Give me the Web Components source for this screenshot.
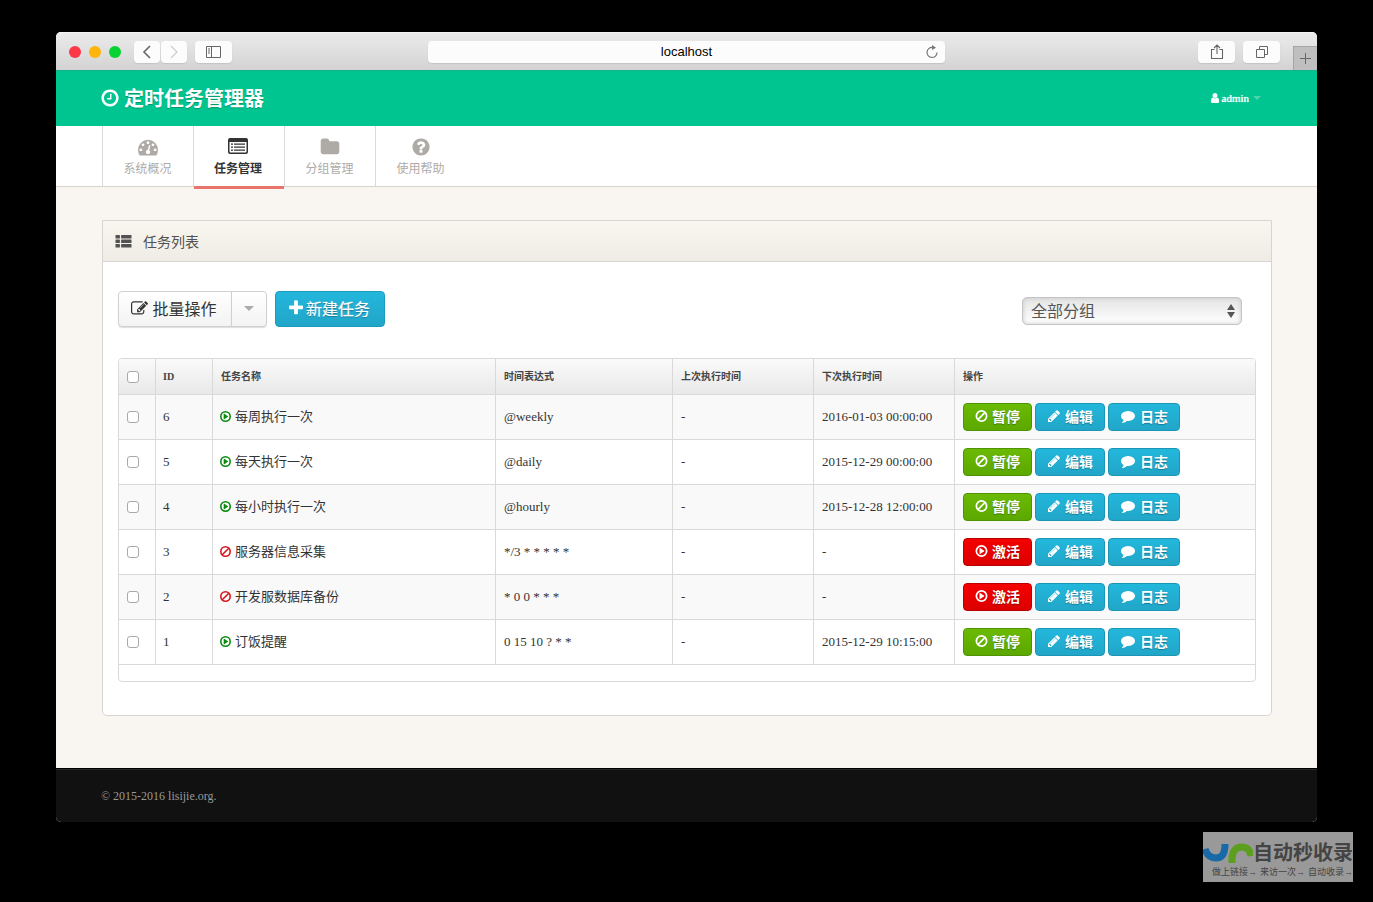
<!DOCTYPE html>
<html lang="zh-CN">
<head>
<meta charset="utf-8">
<title>定时任务管理器</title>
<style>
  body {
    margin: 0;
    padding: 32px 56px 80px;
    background: #000;
    color: #333;
    font: 13px/20px "Liberation Serif", "Noto Sans CJK SC", serif;
  }
</style>
</head>
<body>
<browser-window>
  <app-header></app-header>
  <app-nav>
    <nav-tab icon="dashboard">系统概况</nav-tab>
    <nav-tab icon="listalt" active>任务管理</nav-tab>
    <nav-tab icon="folder">分组管理</nav-tab>
    <nav-tab icon="question">使用帮助</nav-tab>
  </app-nav>
  <app-main>
    <list-panel heading="任务列表">
      <task-toolbar></task-toolbar>
      <task-table></task-table>
    </list-panel>
  </app-main>
  <app-footer>© 2015-2016 lisijie.org.</app-footer>
</browser-window>
<site-badge></site-badge>

<script>
const define = (name, html, setup) => customElements.define(name, class extends HTMLElement {
  connectedCallback() {
    if (this.shadowRoot) return;
    const root = this.attachShadow({ mode: "open" });
    const t = document.createElement("template");
    t.innerHTML = "<style>*{box-sizing:border-box}:host{display:block;box-sizing:border-box}</style>" +
      (typeof html === "function" ? html(this) : html);
    root.append(t.content.cloneNode(true));
    if (setup) setup(root, this);
  }
});

/* Icon set: [viewBox, markup] */
const ICONS = {
  clock: ["128 0 1536 1792", '<path d="M1024 544v448q0 14-9 23t-23 9h-320q-14 0-23-9t-9-23v-64q0-14 9-23t23-9h224v-352q0-14 9-23t23-9h64q14 0 23 9t9 23zm416 352q0-148-73-273t-198-198-273-73-273 73-198 198-73 273 73 273 198 198 273 73 273-73 198-198 73-273zm224 0q0 209-103 385.500t-279.500 279.500-385.500 103-385.500-103-279.500-279.500-103-385.500 103-385.500 279.500-279.500 385.500-103 385.500 103 279.500 279.500 103 385.500z"/>'],
  folder: ["64 0 1664 1792", '<path d="M1728 608v704q0 92-66 158t-158 66h-1216q-92 0-158-66t-66-158v-960q0-92 66-158t158-66h320q92 0 158 66t66 158v32h672q92 0 158 66t66 158z"/>'],
  comment: ["0 0 1792 1792", '<path d="M1792 896q0 174-120 321.500t-326 233-450 85.500q-70 0-145-8-198 175-460 242-49 14-114 22-17 2-30.500-9t-17.500-29v-1q-3-4-.5-12t2-10 4.500-9.500l6-9 7-8.500 8-9q7-8 31-34.500t34.500-38 31-39.500 32.500-51 27-59 26-76q-157-89-247.500-220t-90.500-281q0-130 71-248.500t191-204.500 286-136.500 348-50.500q244 0 450 85.500t326 233 120 321.500z"/>'],
  user: ["256 128 1280 1536", '<path d="M1536 1399q0 109-62.500 187t-150.500 78h-854q-88 0-150.500-78t-62.500-187q0-85 8.500-160.500t31.500-152 58.500-131 94-89 134.500-34.500q131 128 313 128t313-128q76 0 134.500 34.500t94 89 58.500 131 31.500 152 8.500 160.500zm-256-887q0 159-112.500 271.500t-271.500 112.500-271.500-112.500-112.500-271.500 112.500-271.500 271.500-112.500 271.500 112.500 112.500 271.500z"/>'],
  plus: ["192 0 1408 1792", '<path d="M1600 736v192q0 40-28 68t-68 28h-416v416q0 40-28 68t-68 28h-192q-40 0-68-28t-28-68v-416h-416q-40 0-68-28t-28-68v-192q0-40 28-68t68-28h416v-416q0-40 28-68t68-28h192q40 0 68 28t28 68v416h416q40 0 68 28t28 68z"/>'],
  pencil: ["128 0 1536 1792", '<path d="M491 1536l91-91-235-235-91 91v107h128v128h107zm523-928q0-22-22-22-10 0-17 7l-542 542q-7 7-7 17 0 22 22 22 10 0 17-7l542-542q7-7 7-17zm-54-192l416 416-832 832h-416v-416zm683 96q0 53-37 90l-166 166-416-416 166-165q36-38 90-38 53 0 91 38l235 234q37 39 37 91z"/>'],
  question: ["128 0 1536 1792", '<path d="M1024 1376v-192q0-14-9-23t-23-9h-192q-14 0-23 9t-9 23v192q0 14 9 23t23 9h192q14 0 23-9t9-23zm256-672q0-88-55.500-163t-138.500-116-170-41q-243 0-371 213-15 24 8 42l132 100q7 6 19 6 16 0 25-12 53-68 86-92 34-24 86-24 48 0 85.500 26t37.500 59q0 38-20 61t-68 45q-63 28-115.500 86.500t-52.500 125.500v36q0 14 9 23t23 9h192q14 0 23-9t9-23q0-19 21.500-49.500t54.500-49.500q32-18 49-28.500t46-35 44.500-48 28-60.500 12.500-81zm384 192q0 209-103 385.500t-279.500 279.500-385.500 103-385.500-103-279.500-279.500-103-385.500 103-385.500 279.500-279.500 385.500-103 385.500 103 279.500 279.500 103 385.500z"/>'],
  edit: ["0 0 1792 1792", '<path d="M888 1184l116-116-152-152-116 116v56h96v96h56zm440-720q-16-16-33 1l-350 350q-17 17-1 33t33-1l350-350q17-17 1-33zm80 594v190q0 119-84.500 203.500t-203.500 84.500h-832q-119 0-203.500-84.500t-84.500-203.500v-832q0-119 84.500-203.500t203.500-84.500h832q63 0 117 25 15 7 18 23 3 17-9 29l-49 49q-14 14-32 8-23-6-45-6h-832q-66 0-113 47t-47 113v832q0 66 47 113t113 47h832q66 0 113-47t47-113v-126q0-13 9-22l64-64q15-15 35-7t20 29zm-96-738l288 288-672 672h-288v-288zm444 132l-92 92-288-288 92-92q28-28 68-28t68 28l152 152q28 28 28 68t-28 68z"/>'],
  ban: ["128 0 1536 1792", '<g fill="none" stroke="currentColor" stroke-width="222"><circle cx="896" cy="896" r="656"/><path d="M1350 442L442 1350"/></g>'],
  play: ["128 0 1536 1792", '<circle cx="896" cy="896" r="656" fill="none" stroke="currentColor" stroke-width="222"/><path d="M660 500q30-20 64 0l510 350q50 46 0 92l-510 350q-34 20-64 0-20-14-20-42V542q0-28 20-42z"/>'],
  dashboard: ["0 0 1792 1792", '<path fill-rule="evenodd" d="M896 256a896 896 0 0 1 896 896q0 261-141 483-19 29-54 29H195q-35 0-54-29Q0 1413 0 1152a896 896 0 0 1 896-896zM256 1024a128 128 0 1 0 0 256 128 128 0 0 0 0-256zM448 576a128 128 0 1 0 0 256 128 128 0 0 0 0-256zM896 384a128 128 0 1 0 0 256 128 128 0 0 0 0-256zM1344 576a128 128 0 1 0 0 256 128 128 0 0 0 0-256zM1536 1024a128 128 0 1 0 0 256 128 128 0 0 0 0-256zM1004 1185l101-382q6-26-7-48.500t-38-29.500-48 6.500-30 39.500l-101 382q-60 5-107 43.500t-63 98.500q-20 77 20 146t117 89 146-20 89-117q16-60-6-117t-73-91z"/>'],
  listalt: ["0 0 20 20", '<path fill-rule="evenodd" d="M2 1h16q2 0 2 2v12q0 2-2 2H2q-2 0-2-2V3q0-2 2-2zM1.500 5v9.500q0 1 1 1h15q1 0 1-1V5z"/><path d="M3 6.500h2v1.300H3zM6 6.500h11v1.300H6zM3 9.500h2v1.300H3zM6 9.500h11v1.300H6zM3 12.500h2v1.300H3zM6 12.500h11v1.300H6z"/>'],
  thlist: ["0 0 16 14", '<rect y="1" width="4.400" height="3.500" rx=".6"/><rect x="5.600" y="1" width="10.400" height="3.500" rx=".6"/><rect y="5.500" width="4.400" height="3.500" rx=".6"/><rect x="5.600" y="5.500" width="10.400" height="3.500" rx=".6"/><rect y="10" width="4.400" height="3.500" rx=".6"/><rect x="5.600" y="10" width="10.400" height="3.500" rx=".6"/>'],
  caret: ["0 0 10 5", '<path d="M0 0h10L5 5z"/>'],
  updown: ["0 0 8 16", '<path d="M0 7h8L4 1zM0 9h8l-4 6z"/>'],
  back: ["0 0 14 14", '<path d="M10 1L4 7l6 6" fill="none" stroke="currentColor" stroke-width="1.600"/>'],
  forward: ["0 0 14 14", '<path d="M4 1l6 6-6 6" fill="none" stroke="currentColor" stroke-width="1.200"/>'],
  sidebar: ["0 0 16 14", '<path d="M.5 1.500h14v11H.5zM5.500 1.500v11M2 4h2M2 6h2M2 8h2" fill="none" stroke="currentColor"/>'],
  reload: ["0 0 14 14", '<path d="M7.500 2.500A5 5 0 1 0 12 7.500" fill="none" stroke="currentColor" stroke-width="1.200"/><path d="M7 0l4 2.700L7 5z"/>'],
  share: ["0 0 14 16", '<path d="M4.500 5.500h-3v9h11v-9h-3M7 10V1.500M4 4l3-3 3 3" fill="none" stroke="currentColor" stroke-width="1.100"/>'],
  tabs: ["0 0 14 14", '<path d="M1.500 4.500h8v8h-8zM4.500 4.500v-3h8v8h-3" fill="none" stroke="currentColor"/>'],
  newtab: ["0 0 12 12", '<path d="M5.500 0v11M0 5.500h11" fill="none" stroke="currentColor"/>'],
};
define("ui-icon", el => {
  const [box, body] = ICONS[el.getAttribute("name")];
  return `<style>:host{display:inline-block;flex:none;width:14px;height:14px}svg{display:block;width:100%;height:100%;overflow:visible;fill:currentColor}</style>
  <svg viewBox="${box}" aria-hidden="true">${body}</svg>`;
});

define("browser-bar", `<style>
  :host{display:grid;grid-template-columns:1fr minmax(0,517px) 1fr;height:38px;background:linear-gradient(#ebebeb,#d3d3d3);border-top:1px solid #f5f5f5}
  .side{display:flex;align-items:center;padding-left:13px}
  .lights{display:flex;gap:8px;margin-right:13px}
  .light{width:12px;height:12px;border-radius:50%}
  button{display:flex;align-items:center;justify-content:center;height:22px;padding:0;border:0;border-radius:4px;background:#fcfcfc;color:#666;box-shadow:0 1px 1px #c4c4c4}
  .back{width:26px;margin-right:1px}
  .fwd{width:26px;color:#ccc;margin-right:8px}
  .wide{width:37px}
  .address{align-self:center;display:flex;align-items:center;height:22px;padding:0 6px;border-radius:4px;background:#fcfcfc;color:#777;box-shadow:0 1px 1px #c4c4c4}
  input{flex:1;min-width:0;padding:0 0 0 14px;border:0;background:none;outline:0;text-align:center;color:#000;font:13px/20px "Liberation Sans",Arial,sans-serif}
  .right{justify-content:flex-end;gap:8px;padding:0}
  .new{align-self:flex-end;width:24px;height:24px;margin-left:5px;border:1px solid #a5a5a5;border-width:1px 0 0 1px;border-radius:0;background:#bfbfbf;box-shadow:none}
  </style>
  <div class="side"><div class="lights"><span class="light" style="background:#fc3948"></span><span class="light" style="background:#fdb50b"></span><span class="light" style="background:#08d334"></span></div>
    <button class="back" aria-label="后退"><ui-icon name="back"></ui-icon></button>
    <button class="fwd" aria-label="前进"><ui-icon name="forward"></ui-icon></button>
    <button class="wide" aria-label="边栏"><ui-icon name="sidebar" style="width:16px"></ui-icon></button></div>
  <div class="address"><input aria-label="地址" value="localhost"><ui-icon name="reload"></ui-icon></div>
  <div class="side right">
    <button class="wide" aria-label="共享"><ui-icon name="share" style="height:16px"></ui-icon></button>
    <button class="wide" aria-label="标签页"><ui-icon name="tabs"></ui-icon></button>
    <button class="new" aria-label="新标签页"><ui-icon name="newtab" style="width:12px;height:12px"></ui-icon></button></div>`);

define("browser-window", `<style>:host{border-radius:5px;overflow:hidden;background:#f9f6f1}</style>
  <browser-bar></browser-bar><slot></slot>`);

define("app-header", `<style>
  :host{display:flex;align-items:center;justify-content:space-between;height:56px;padding:0 56px 0 45px;background:#00c590;border-top:1px solid #13b588;color:#fff}
  h1{display:flex;align-items:center;gap:5px;margin:0;font-size:20px;line-height:28px;font-weight:bold;text-shadow:0 1px 1px #00966d}
  h1 ui-icon{width:18px;height:20px;margin-bottom:2px}
  a{display:flex;align-items:center;padding-bottom:2px;color:#fff;font-size:11px;line-height:16px;text-decoration:none;text-shadow:0 0 1px #fff}
  .user{width:10px;height:10px;margin-right:2px}
  .caret{width:8px;height:4px;margin-left:4px;color:#4fd2ae}
  </style>
  <h1><ui-icon name="clock"></ui-icon>定时任务管理器</h1>
  <a href="#user"><ui-icon class="user" name="user"></ui-icon>admin<ui-icon class="caret" name="caret"></ui-icon></a>`);

define("app-nav", `<style>:host{background:#fff;border-bottom:1px solid #d6d2cd;padding-left:46px}nav{display:flex;height:60px}</style><nav><slot></slot></nav>`);

define("nav-tab", el => `<style>
  :host{width:91px;border-left:1px solid #d9d9d9}
  a{display:flex;flex-direction:column;align-items:center;gap:3px;height:63px;padding:11px 1px 0 0;color:#aeaba7;font-size:12px;line-height:18px;text-decoration:none}
  ui-icon{width:20px;height:20px}
  :host([active]) a{position:relative;padding-right:2px;color:#333;font-weight:bold;border-bottom:3px solid #e8746c}
  </style><a href="#${el.getAttribute("icon")}"><ui-icon name="${el.getAttribute("icon")}"></ui-icon><span><slot></slot></span></a>`);

define("app-main", `<style>:host{padding:33px 45px 52px 46px}</style><slot></slot>`);

define("list-panel", el => `<style>
  section{border:1px solid #d8d5d1;border-radius:0 0 5px 5px;background:#fff}
  h2{display:flex;align-items:center;gap:11px;height:41px;margin:0;padding:3px 13px 0 12px;background:linear-gradient(#f9f6f0,#efece6);border-bottom:1px solid #d8d5d1;color:#525252;font-size:14px;line-height:20px;font-weight:normal}
  h2 ui-icon{width:17px;height:14px;margin-bottom:3px}
  .body{padding:29px 15px 33px}
  </style><section><h2><ui-icon name="thlist"></ui-icon>${el.getAttribute("heading")}</h2><div class="body"><slot></slot></div></section>`);

define("task-toolbar", `<style>
  :host{display:flex;align-items:center;margin-bottom:31px}
  button{display:flex;align-items:center;justify-content:center;height:36px;padding:2px 0 0;font:16px/20px "Liberation Serif","Noto Sans CJK SC",serif;text-shadow:0 1px 0 #fff}
  button ui-icon{margin-bottom:4px}
  .batch,.more{border:1px solid #d0d0d0;background:linear-gradient(#fff,#f3f3f3);color:#333;box-shadow:0 1px 1px #ddd}
  .batch{gap:4px;width:114px;padding-right:2px;border-radius:4px 0 0 4px}
  .more{width:36px;margin-left:-1px;border-radius:0 4px 4px 0;color:#aaa}
  .add{gap:3px;width:110px;padding-right:1px;margin-left:8px;border:1px solid #1c9cbc;border-radius:4px;background:linear-gradient(#23b7dc,#21a6c8);color:#fff;text-shadow:0 1px 1px #157b96,0 0 1px #fff}
  .group{position:relative;width:220px;margin:4px 14px 0 auto}
  select{appearance:none;display:block;width:100%;height:28px;padding:1px 24px 0 8px;border:1px solid #c4c4c4;border-radius:5px;background:linear-gradient(#e4e4e4,#fff);box-shadow:inset 0 0 4px #c8c8c8;color:#555;font:16px/20px "Liberation Serif","Noto Sans CJK SC",serif}
  .group ui-icon{position:absolute;right:7px;top:6px;width:8px;height:16px;color:#555;pointer-events:none}
  </style>
  <button class="batch"><ui-icon name="edit" style="width:17px;height:17px"></ui-icon>批量操作</button><button class="more" aria-label="更多操作"><ui-icon name="caret" style="width:10px;height:5px"></ui-icon></button>
  <button class="add"><ui-icon name="plus" style="width:14px;height:18px"></ui-icon>新建任务</button>
  <div class="group"><select aria-label="分组"><option>全部分组</option></select><ui-icon name="updown"></ui-icon></div>`);

define("action-button", `<style>
  :host{display:block}
  button{display:flex;align-items:center;justify-content:center;gap:4px;height:28px;padding:2px 11px 0;border:1px solid #1c96b6;border-radius:4px;background:linear-gradient(#23b7dc,#21a6c8);color:#fff;font:bold 14px/20px "Liberation Serif","Noto Sans CJK SC",serif;text-shadow:0 1px 1px #157b96;white-space:nowrap}
  :host([kind=pause]) button{border-color:#4d9400;background:linear-gradient(#6bba05,#5ca800);text-shadow:0 1px 1px #3f7a00}
  :host([kind=start]) button{border-color:#b80000;background:linear-gradient(#f50000,#dc0000);text-shadow:0 1px 1px #900}
  </style><button><slot></slot></button>`);

const TASKS = [
  [6, "每周执行一次", "@weekly", "2016-01-03 00:00:00", true],
  [5, "每天执行一次", "@daily", "2015-12-29 00:00:00", true],
  [4, "每小时执行一次", "@hourly", "2015-12-28 12:00:00", true],
  [3, "服务器信息采集", "*/3 * * * * *", "-", false],
  [2, "开发服数据库备份", "* 0 0 * * *", "-", false],
  [1, "订饭提醒", "0 15 10 ? * *", "2015-12-29 10:15:00", true],
];
define("task-table", () => `<style>
  table{width:100%;table-layout:fixed;border:1px solid #d9d9d9;border-radius:4px;border-spacing:0;overflow:hidden}
  th,td{padding:0 8px;text-align:left;vertical-align:middle;overflow:hidden;white-space:nowrap}
  th + th,td + td{border-left:1px solid #d9d9d9}
  th:nth-child(2),td:nth-child(2),th:nth-child(3),td:nth-child(3){padding-left:7px}
  th{height:36px;border-bottom:1px solid #d9d9d9;background:linear-gradient(#fafafa,#e9e9e9);color:#444;font-size:10px;line-height:16px}
  th:nth-child(3){padding-left:8px}
  tbody td{height:45px;border-bottom:1px solid #d9d9d9}
  tbody tr:nth-child(odd){background:#f9f9f9}
  tfoot td{height:16px}
  input{appearance:none;display:block;width:12px;height:12px;margin:0;border:1px solid #a9a9a9;border-radius:3px;background:#fff}
  .name{display:flex;align-items:center;gap:4px}
  .name ui-icon{width:11px;height:13px;margin-bottom:2px;color:#d8141c}
  .name ui-icon[name=play]{color:#0b8a10}
  .actions{display:flex;gap:3px}
  .actions ui-icon{margin-bottom:4px}
  .slim{width:13px}.mid{width:14px}.full{width:16px}
  </style>
  <table>
  <colgroup><col style="width:36px"><col style="width:57px"><col style="width:283px"><col style="width:177px"><col style="width:141px"><col style="width:141px"><col></colgroup>
  <thead><tr><th><input type="checkbox" aria-label="全选"></th><th>ID</th><th>任务名称</th><th>时间表达式</th><th>上次执行时间</th><th>下次执行时间</th><th>操作</th></tr></thead>
  <tbody>${TASKS.map(([id, name, spec, next, on]) => `<tr>
    <td><input type="checkbox" aria-label="选择任务 ${id}"></td><td>${id}</td>
    <td><div class="name"><ui-icon name="${on ? "play" : "ban"}"></ui-icon><span>${name}</span></div></td>
    <td>${spec}</td><td>-</td><td>${next}</td>
    <td><div class="actions"><action-button kind="${on ? "pause" : "start"}"><ui-icon class="slim" name="${on ? "ban" : "play"}"></ui-icon>${on ? "暂停" : "激活"}</action-button><action-button><ui-icon class="mid" name="pencil"></ui-icon>编辑</action-button><action-button><ui-icon class="full" name="comment"></ui-icon>日志</action-button></div></td></tr>`).join("")}</tbody>
  <tfoot><tr><td colspan="7"></td></tr></tfoot></table>`);

define("app-footer", `<style>
  footer{height:54px;padding:17px 45px;border-top:1px solid #000;background:#111;box-shadow:inset 0 1px 0 #292929;color:#999;font-size:12px;line-height:20px}
  </style><footer><slot></slot></footer>`);

define("site-badge", `<style>
  :host{position:absolute;right:20px;top:832px;width:150px;height:50px;overflow:hidden;background:#999;color:#444;font-family:"Liberation Sans","Noto Sans CJK SC",sans-serif}
  .top{display:flex;align-items:center;height:32px;padding-top:10px}
  svg{flex:none;width:50px;height:22px}
  b{font-size:20px;line-height:22px;white-space:nowrap}
  .sub{display:flex;gap:3px;padding:1px 0 0 9px;font-size:9px;line-height:14px;white-space:nowrap}
  .sub span{width:45px}
  </style>
  <div class="top"><svg viewBox="0 0 50 22" fill="none" stroke-width="7"><path d="M2 7c2 7 6 9 11 9 6 0 9-4 9-14" stroke="#1769a8"/><path d="M29 21v-4c0-8 4-12 10-12 5 0 8 3 9 9" stroke="#5c9e1e"/></svg><b>自动秒收录</b></div>
  <div class="sub"><span>做上链接→</span><span>来访一次→</span><span>自动收录→</span></div>`);
</script>
</body>
</html>
